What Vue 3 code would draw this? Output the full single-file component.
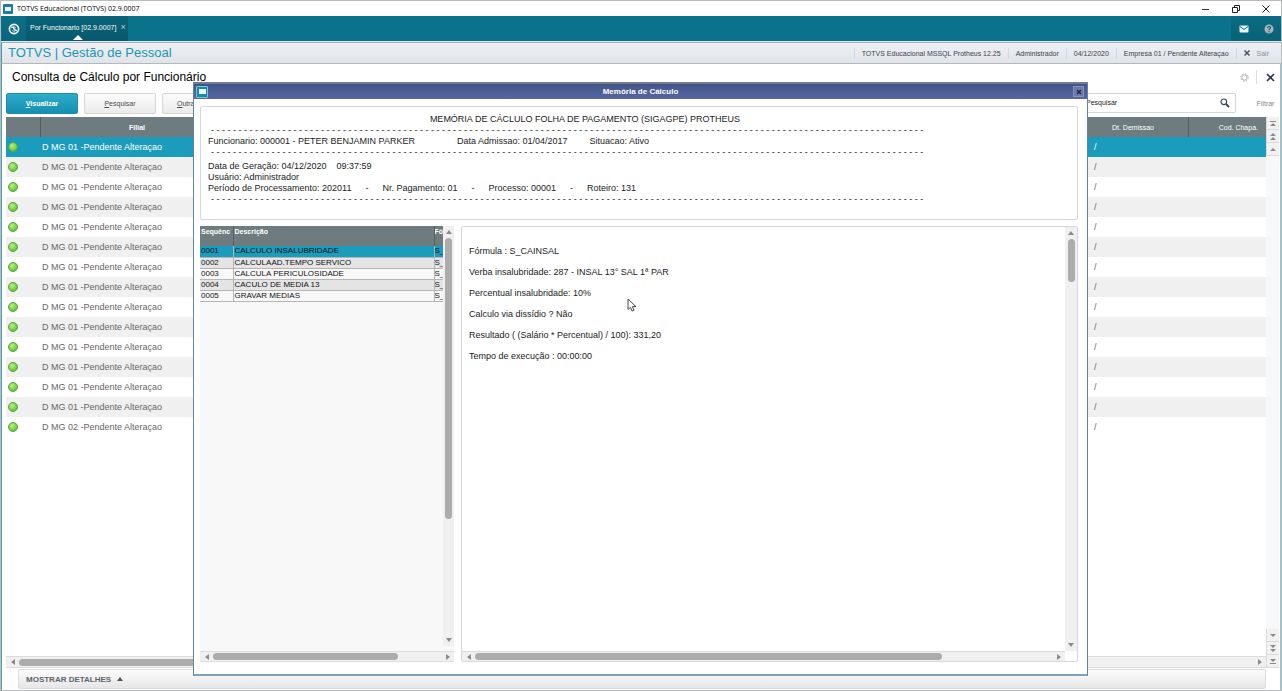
<script setup>
import { ref } from 'vue'

const search = ref('Pesquisar')
const branches = [
  ...Array.from({ length: 14 }, () => 'D MG 01 -Pendente Alteraçao'),
  'D MG 02 -Pendente Alteraçao',
]
const session = [
  'TOTVS Educacional MSSQL Protheus 12.25',
  'Administrador',
  '04/12/2020',
  'Empresa 01 / Pendente Alteraçao',
]
const dashes = '- '.repeat(130).trim()
const steps = [
  ['0001', 'CALCULO INSALUBRIDADE'],
  ['0002', 'CALCULAAD.TEMPO SERVICO'],
  ['0003', 'CALCULA PERICULOSIDADE'],
  ['0004', 'CACULO DE MEDIA 13'],
  ['0005', 'GRAVAR MEDIAS'],
]
const details = [
  'Fórmula : S_CAINSAL',
  'Verba insalubridade: 287 - INSAL 13° SAL 1ª PAR',
  'Percentual insalubridade: 10%',
  'Calculo via dissídio ? Não',
  'Resultado ( (Salário * Percentual) / 100): 331,20',
  'Tempo de execução : 00:00:00',
]
</script>

<template>
  <div class="window">
    <header class="titlebar">
      <span class="app-icon"><i></i></span>
      <span class="titlebar-text">TOTVS Educacional (TOTVS) 02.9.0007</span>
      <button class="win-btn" aria-label="Minimizar">
        <svg width="10" height="10" viewBox="0 0 10 10"><path d="M1 5.5H8" stroke="#333" /></svg>
      </button>
      <button class="win-btn" aria-label="Restaurar">
        <svg width="10" height="10" viewBox="0 0 10 10" fill="none" stroke="#222"><path d="M1.5 3.5h5v5h-5zM3.5 3V1.500h5v5H7" /></svg>
      </button>
      <button class="win-btn" aria-label="Fechar">
        <svg width="10" height="10" viewBox="0 0 10 10"><path d="M1.500 1.500l7 7M8.500 1.500l-7 7" stroke="#222" /></svg>
      </button>
    </header>

    <nav class="tabs">
      <button class="logo" aria-label="Menu TOTVS">
        <svg width="12" height="12" viewBox="0 0 12 12" fill="none" stroke="#fff">
          <circle cx="6" cy="6" r="4.600" stroke-width="1.600" />
          <path d="M3.300 4.500C5 3.600 6 5 6.200 5.700S7.600 8 9 7.300" stroke-width="1.500" />
          <path d="M5.200 3.200l2.600 1.600M4.200 7.400l2.600 1.400" stroke-width=".8" />
        </svg>
      </button>
      <a class="tab" href="#">Por Funcionario [02.9.0007] <span class="tab-x">×</span></a>
      <button class="nav-btn push" aria-label="Mensagens">
        <svg width="10" height="8" viewBox="0 0 10 8"><rect x=".5" y=".5" width="9" height="7" rx="1" fill="#e8f5f8" /><path d="M1 1.500l4 3 4-3" fill="none" stroke="#0b6a80" /></svg>
      </button>
      <button class="nav-btn" aria-label="Ajuda">
        <svg width="10" height="10" viewBox="0 0 10 10"><circle cx="5" cy="5" r="4.500" fill="#a9b4b8" /><path d="M3.500 4c0-2 3-2 3-.2C6.500 5 5 4.800 5 6.200M5 7v1.200" fill="none" stroke="#0b6075" stroke-width="1.100" /></svg>
      </button>
    </nav>

    <div class="ribbon">
      <span class="brand">TOTVS | Gestão de Pessoal</span>
      <span v-for="s in session" :key="s" class="session">{{ s }}</span>
      <button class="exit">
        <svg width="8" height="8" viewBox="0 0 8 8"><path d="M1.500 1.500l5 5M6.500 1.500l-5 5" stroke="#4a5563" stroke-width="1.500" /></svg>
        Sair
      </button>
    </div>

    <main class="page">
      <div class="heading">
        <h1>Consulta de Cálculo por Funcionário</h1>
        <button class="icon-btn gear" aria-label="Configurar">
          <svg width="9" height="9" viewBox="0 0 9 9" fill="none" stroke="#a2a2a2"><circle cx="4.500" cy="4.500" r="2.600" stroke-width=".8" /><circle cx="4.500" cy="4.500" r="3.700" stroke-dasharray="1.400 1.506" /></svg>
        </button>
        <button class="icon-btn" aria-label="Fechar consulta">
          <svg width="9" height="9" viewBox="0 0 9 9"><path d="M1 1l7 7M8 1L1 8" stroke="#2c3a50" stroke-width="1.700" /></svg>
        </button>
      </div>

      <div class="toolbar">
        <button class="btn primary"><u>V</u>isualizar</button>
        <button class="btn"><u>P</u>esquisar</button>
        <button class="btn"><u>O</u>utras Ações</button>
        <label class="search">
          <input v-model="search" type="text" aria-label="Pesquisar" />
          <svg width="10" height="10" viewBox="0 0 10 10" fill="none" stroke="#35465c"><circle cx="3.800" cy="3.800" r="2.800" stroke-width="1.200" /><path d="M6 6l3 3" stroke-width="1.800" /></svg>
        </label>
        <button class="filter">Filtrar</button>
      </div>

      <div class="browse">
        <div class="browse-main">
          <table class="grid">
            <colgroup><col class="c-status" /><col class="c-branch" /><col /><col class="c-exit" /><col class="c-badge" /></colgroup>
            <thead>
              <tr><th></th><th class="bold">Filial</th><th></th><th>Dt. Demissao</th><th class="last">Cod. Chapa.</th></tr>
            </thead>
            <tbody>
              <tr v-for="(b, i) in branches" :key="i" :class="{ selected: i === 0 }">
                <td class="status"><i class="led"></i></td>
                <td class="branch">{{ b }}</td>
                <td></td>
                <td class="slash">/</td>
                <td></td>
              </tr>
            </tbody>
          </table>
          <div class="hbar main-h">
            <button class="arr left" aria-label="Rolar à esquerda"></button>
            <div class="track"><div class="thumb"></div></div>
            <button class="arr right" aria-label="Rolar à direita"></button>
          </div>
        </div>
        <div class="pager">
          <button aria-label="Primeiro"><i class="dash"></i><i class="up"></i></button>
          <button aria-label="Página anterior"><i class="up"></i><i class="up"></i></button>
          <button aria-label="Linha anterior"><i class="up"></i></button>
          <span class="fill"></span>
          <button aria-label="Próxima linha"><i class="down"></i></button>
          <button aria-label="Próxima página"><i class="down"></i><i class="down"></i></button>
          <button aria-label="Último"><i class="down"></i><i class="dash"></i></button>
        </div>
      </div>

      <button class="details">MOSTRAR DETALHES <i class="tri"></i></button>
    </main>

    <section class="dialog" role="dialog" aria-label="Memória de Cálculo">
      <header class="dialog-bar">
        <span class="app-icon boxed"><i></i></span>
        <h2>Memória de Cálculo</h2>
        <button class="dialog-x" aria-label="Fechar">
          <svg width="6" height="6" viewBox="0 0 6 6"><path d="M1 1l4 4M5 1L1 5" stroke="#1b2340" stroke-width="1.300" /></svg>
        </button>
      </header>
      <div class="dialog-body">
        <div class="summary">
          <p class="center">MEMÓRIA DE CÁCLULO FOLHA DE PAGAMENTO (SIGAGPE) PROTHEUS</p>
          <p class="dashes">{{ dashes }}</p>
          <p class="cells employee"><span>Funcionario: 000001 - PETER BENJAMIN PARKER</span><span>Data Admissao: 01/04/2017</span><span>Situacao: Ativo</span></p>
          <p class="dashes">{{ dashes }}</p>
          <p class="cells generated"><span>Data de Geração: 04/12/2020</span><span>09:37:59</span></p>
          <p>Usuário: Administrador</p>
          <p class="cells period"><span>Período de Processamento: 202011</span><span>-</span><span>Nr. Pagamento: 01</span><span>-</span><span>Processo: 00001</span><span>-</span><span>Roteiro: 131</span></p>
          <p class="dashes">{{ dashes }}</p>
        </div>

        <div class="panes">
          <div class="steps">
            <div class="steps-view">
              <table>
                <colgroup><col class="s-seq" /><col /><col class="s-formula" /></colgroup>
                <thead><tr><th>Sequênc</th><th>Descrição</th><th>Fó</th></tr></thead>
                <tbody>
                  <tr v-for="(s, i) in steps" :key="s[0]" :class="{ selected: i === 0 }">
                    <td>{{ s[0] }}</td><td>{{ s[1] }}</td><td>S_</td>
                  </tr>
                </tbody>
              </table>
              <div class="vbar steps-v">
                <button class="arr up-arr" aria-label="Rolar para cima"></button>
                <div class="track"><div class="thumb"></div></div>
                <button class="arr down-arr" aria-label="Rolar para baixo"></button>
              </div>
            </div>
            <div class="hbar steps-h">
              <button class="arr left" aria-label="Rolar à esquerda"></button>
              <div class="track"><div class="thumb"></div></div>
              <button class="arr right" aria-label="Rolar à direita"></button>
            </div>
          </div>

          <div class="result">
            <div class="result-view">
              <div class="result-text"><p v-for="d in details" :key="d">{{ d }}</p></div>
              <div class="hbar result-h">
                <button class="arr left" aria-label="Rolar à esquerda"></button>
                <div class="track"><div class="thumb"></div></div>
                <button class="arr right" aria-label="Rolar à direita"></button>
              </div>
            </div>
            <div class="vbar result-v">
              <button class="arr up-arr" aria-label="Rolar para cima"></button>
              <div class="track"><div class="thumb"></div></div>
              <button class="arr down-arr" aria-label="Rolar para baixo"></button>
            </div>
          </div>
        </div>
      </div>
    </section>

    <svg class="cursor" width="10" height="14" viewBox="0 0 10 14"><path d="M1 1v10.500l2.500-2.200L5 13l2-.8-1.600-3.600H9z" fill="#fff" stroke="#333" stroke-width=".9" /></svg>
  </div>
</template>

<style>
body { background: #fff; }
</style>

<style scoped>
* { box-sizing: border-box; }
.window {
  position: relative;
  display: flex;
  flex-direction: column;
  min-height: 100vh;
  border: 1px solid #b9bbbd;
  background: #fff;
  color: #222;
  font: 9px/11px "Liberation Sans", Arial, sans-serif;
}
button {
  display: flex;
  align-items: center;
  justify-content: center;
  padding: 0;
  border: 0;
  background: none;
  color: inherit;
  font: inherit;
}
p, h1, h2 { margin: 0; font-weight: normal; }

.titlebar { display: flex; align-items: center; height: 15px; padding-left: 2px; }
.titlebar-text { margin: 0 auto 0 4px; font: 7px/12px "Open Sans", "Noto Sans", sans-serif; color: #000; }
.app-icon {
  display: flex;
  align-items: center;
  justify-content: center;
  width: 10px;
  height: 10px;
  border-radius: 1px;
  background: #1b7f9c;
}
.app-icon i { width: 6px; height: 4px; background: #e9f6fa; }
.win-btn { width: 30px; height: 15px; }

.tabs {
  display: flex;
  height: 26px;
  padding-left: 1px;
  border-bottom: 1px solid #d7e8ee;
  background: #0b728c;
  color: #fff;
  font-size: 7px;
}
.logo { width: 24px; background: linear-gradient(#0b7089, #09657c); }
.tab {
  position: relative;
  display: flex;
  align-items: center;
  padding: 0 2px 2px 4px;
  background: linear-gradient(#0a6379, #07596d);
  color: #fff;
  text-decoration: none;
}
.tab::after {
  content: "";
  position: absolute;
  bottom: 1px;
  left: 47px;
  border: 5px solid transparent;
  border-top: 0;
  border-bottom-color: #fff;
}
.tab-x { margin-left: 4px; color: #b7d4dc; font-size: 9px; }
.push { margin-left: auto; }
.nav-btn { width: 25px; background: linear-gradient(#0a6c84, #086177); }

.ribbon {
  display: flex;
  align-items: center;
  height: 22px;
  padding-left: 6px;
  border-top: 1px solid #a9b0b6;
  border-bottom: 1px solid #b3b8bc;
  border-left: 1px solid #3c9fb9;
  background: linear-gradient(#eef0f3, #e0e4e9);
  color: #3d4249;
  font-size: 7px;
}
.brand { margin-right: auto; color: #1b96b8; font-size: 13px; line-height: 20px; }
.session { padding: 0 7px; border-left: 1px solid #d5d9de; }
.exit { gap: 6px; padding: 0 12px 0 6px; border-left: 1px solid #d5d9de; color: #8b9097; }

.page {
  display: flex;
  flex: 1;
  flex-direction: column;
  padding: 0 1px 1px 4px;
  border-left: 1px solid #4aa0b6;
  border-right: 1px solid #8cc5d4;
}
.heading { display: flex; align-items: center; height: 29px; padding: 0 1px 3px 6px; }
.heading h1 { margin-right: auto; color: #000; font-size: 12px; line-height: 16px; }
.icon-btn { width: 15px; height: 14px; }
.gear { width: 20px; margin-right: 6px; padding-right: 4px; border-right: 1px solid #dedede; }

.toolbar { display: flex; gap: 6px; height: 24px; padding-bottom: 3px; }
.btn {
  width: 72px;
  height: 21px;
  border: 1px solid #d6d6d6;
  border-radius: 2px;
  background: linear-gradient(#fcfcfc, #eaeaea);
  color: #4c4c4c;
  font-size: 7px;
}
.primary { border-color: #1790b0; background: linear-gradient(#2cabca, #168fb0); color: #fff; font-weight: bold; }
.search {
  display: flex;
  align-items: center;
  width: 158px;
  height: 20px;
  margin-left: auto;
  padding: 0 5px 0 7px;
  border: 1px solid #cfd8d8;
  border-radius: 2px;
}
.search input {
  flex: 1;
  min-width: 0;
  padding: 0;
  border: 0;
  outline: 0;
  background: none;
  color: #222;
  font: 7px/10px "Liberation Sans", Arial, sans-serif;
}
.filter { width: 37px; height: 20px; padding-left: 10px; color: #84898e; font-size: 7px; }

.browse { display: flex; flex: 1; }
.browse-main { display: flex; flex: 1; flex-direction: column; min-width: 0; }
.grid { width: 100%; border-collapse: collapse; table-layout: fixed; }
.c-status { width: 34px; }
.c-branch { width: 194px; }
.c-exit { width: 110px; }
.c-badge { width: 78px; }
.grid th {
  height: 20px;
  padding: 0;
  border-right: 1px solid #525e61;
  background: #6e7c80;
  color: #fff;
  font-size: 7px;
  font-weight: normal;
}
.grid th.bold { font-weight: bold; }
.grid th.last { padding-right: 8px; border-right: 0; text-align: right; }
.grid td { height: 20px; padding: 0; color: #666; }
.grid tbody tr:nth-child(even) { background: #f0f0f0; }
.grid tr.selected { background: #1b9cbd; }
.grid tr.selected td { color: #fff; }
.grid td.status { padding-left: 2px; }
.grid td.branch { padding-left: 2px; font-size: 9px; }
.grid td.slash { padding-left: 16px; }
.led {
  display: block;
  width: 10px;
  height: 10px;
  border: 1px solid #5fa04a;
  border-radius: 50%;
  background: radial-gradient(circle at 40% 35%, #b9f08a, #66cc33 70%);
}

.hbar, .vbar { display: flex; flex: none; background: #f0f0f0; }
.hbar { height: 11px; align-items: center; border-top: 1px solid #dcdcdc; border-bottom: 1px solid #dcdcdc; }
.vbar { flex-direction: column; width: 12px; align-items: center; }
.track { flex: 1; }
.thumb { border-radius: 4px; background: #acacac; }
.hbar .thumb { height: 7px; }
.vbar .thumb { width: 7px; }
.arr { width: 13px; height: 10px; }
.vbar .arr { height: 12px; }
.arr::before { content: ""; border: 3px solid transparent; }
.left::before { border-width: 3px 4px 3px 0; border-right-color: #8a8a8a; }
.right::before { border-width: 3px 0 3px 4px; border-left-color: #8a8a8a; }
.up-arr::before { border-width: 0 3px 4px; border-bottom-color: #8a8a8a; }
.down-arr::before { border-width: 4px 3px 0; border-top-color: #8a8a8a; }

.main-h { height: 12px; margin-top: auto; }
.main-h .thumb { width: 60%; }

.pager { display: flex; flex-direction: column; width: 13px; background: #f7f8fa; }
.pager button {
  flex-direction: column;
  gap: 1px;
  width: 100%;
  height: 13px;
  border-bottom: 1px solid #dadada;
  border-left: 1px solid #dadada;
  background: #f1f1f2;
}
.fill { flex: 1; }
.up, .down { border: 2px solid transparent; }
.up { border-width: 0 3px 3px; border-bottom-color: #8a8a8a; }
.down { border-width: 3px 3px 0; border-top-color: #8a8a8a; }
.dash { width: 6px; height: 1px; background: #8a8a8a; }

.details {
  justify-content: flex-start;
  gap: 6px;
  height: 20px;
  margin: 1px 13px 0 12px;
  padding-left: 7px;
  border: 1px solid #dcdcdc;
  border-radius: 2px;
  background: linear-gradient(#fcfcfc, #e6e6e6);
  color: #5d636b;
  font-size: 8px;
  font-weight: bold;
}
.tri { border: 3px solid transparent; border-top: 0; border-bottom: 4px solid #4c5560; }

.dialog {
  position: absolute;
  top: 81px;
  right: 193px;
  bottom: 14px;
  left: 192px;
  display: flex;
  flex-direction: column;
  border: 1px solid #5d83a8;
  border-top: 2px solid #737b93;
  border-bottom: 2px solid #7f9fbd;
  background: #fff;
}
.dialog-bar {
  display: flex;
  align-items: center;
  height: 15px;
  padding: 0 3px 0 2px;
  background: linear-gradient(#435489, #5668a2);
}
.boxed { width: 12px; height: 12px; border: 1px solid #79c6d8; background: #178aa8; }
.boxed i { width: 7px; height: 5px; }
.dialog-bar h2 { flex: 1; color: #fff; font-size: 8px; font-weight: bold; text-align: center; }
.dialog-x { width: 11px; height: 11px; border: 1px solid #8490bb; background: #6c7aab; }
.dialog-body { display: flex; flex: 1; flex-direction: column; gap: 6px; padding: 7px 9px 12px 6px; }
.summary { height: 114px; padding: 7px; border: 1px solid #d6d8d8; border-radius: 2px; }
.center { padding-right: 108px; text-align: center; }
.dashes { padding-left: 3px; overflow: hidden; white-space: nowrap; }
.cells { display: flex; white-space: nowrap; }
.employee { gap: 22px; }
.employee span:first-child { margin-right: 20px; }
.generated { gap: 10px; padding-top: 3px; height: 14px; }
.period { gap: 14px; }

.panes { display: flex; flex: 1; gap: 7px; }
.steps { display: flex; flex-direction: column; width: 254px; background: #f8f8f8; }
.steps-view { display: flex; flex: 1; align-items: flex-start; }
.steps table { flex: 1; width: 0; border-collapse: collapse; table-layout: fixed; }
.s-seq { width: 33px; }
.s-formula { width: 9px; }
.steps th, .steps td { padding: 0 0 0 1px; overflow: hidden; text-align: left; white-space: nowrap; }
.steps th {
  height: 20px;
  border-right: 1px solid #525e61;
  background: #6e7c80;
  color: #fff;
  font-size: 7px;
  line-height: 11px;
  vertical-align: top;
}
.steps td { height: 11px; border: solid #b5b5b5; border-width: 0 1px 1px 0; color: #111; font-size: 8px; line-height: 10px; }
.steps th:last-child, .steps td:last-child { padding-left: 0; border-right: 0; }
.steps tbody tr { background: #f8f8f8; }
.steps tbody tr:nth-child(even) { background: #e4e4e4; }
.steps tbody tr.selected { background: #1b9cbd; }
.steps-v { align-self: stretch; width: 11px; margin-bottom: 5px; }
.steps-v .thumb { height: 71%; }
.steps-h .thumb { width: 81%; }

.result { display: flex; flex: 1; border: 1px solid #d6d8d8; border-radius: 2px; }
.result-view { display: flex; flex: 1; flex-direction: column; }
.result-text { flex: 1; padding: 14px 7px; line-height: 21px; }
.result-h { border-bottom: 0; height: 10px; }
.result-h .thumb { width: 81%; }
.result-v { margin-bottom: 10px; }
.result-v .thumb { height: 43px; }

.cursor { position: absolute; top: 297px; left: 626px; }
</style>
